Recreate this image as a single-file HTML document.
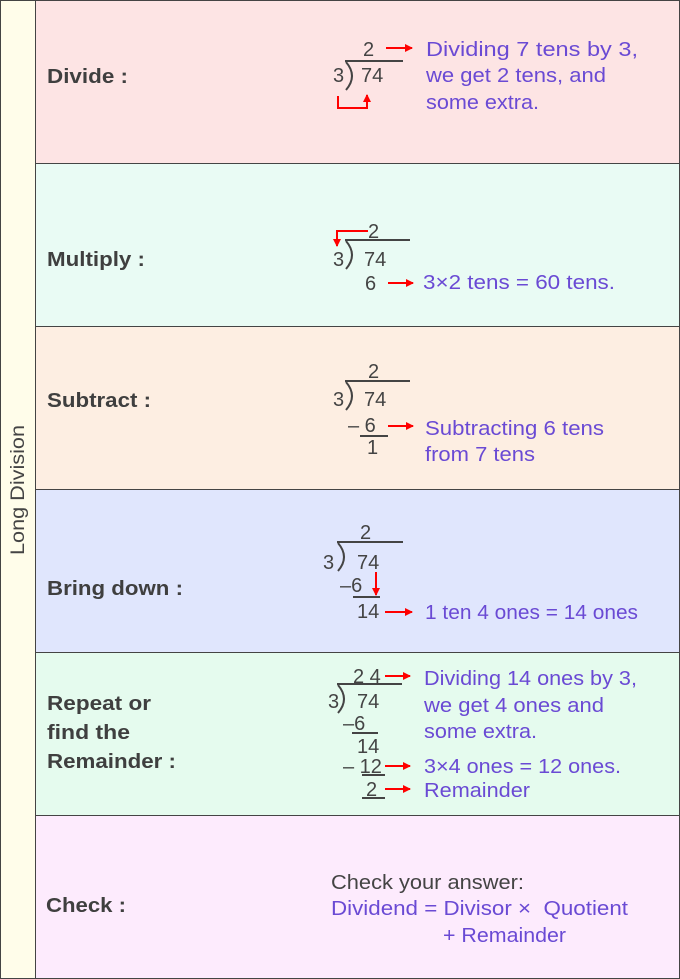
<!DOCTYPE html>
<html><head><style>
body{margin:0;width:680px;height:979px;overflow:hidden;background:#fff}
svg{display:block}
text{font-family:"Liberation Sans",sans-serif}
.l{font-size:20px;font-weight:bold;fill:#3f3f3f}
.d{font-size:20px;fill:#444}
.p{font-size:20px;fill:#6a4ad4}
</style></head><body>
<svg width="680" height="979" viewBox="0 0 680 979">
<defs><marker id="a" markerWidth="8" markerHeight="8" refX="7" refY="4" orient="auto" markerUnits="userSpaceOnUse"><path d="M0,0 L8,4 L0,8Z" fill="#f00"/></marker></defs>
<rect x="0" y="0" width="680" height="979" fill="#444"/>
<rect x="1" y="1" width="34" height="977" fill="#fffdea"/>
<rect x="36" y="1" width="643" height="162" fill="#fde4e4"/>
<rect x="36" y="164" width="643" height="162" fill="#e9fbf4"/>
<rect x="36" y="327" width="643" height="162" fill="#fdeee2"/>
<rect x="36" y="490" width="643" height="162" fill="#e0e6fd"/>
<rect x="36" y="653" width="643" height="162" fill="#e5fbee"/>
<rect x="36" y="816" width="643" height="162" fill="#fdebfd"/>
<text transform="translate(24,490) rotate(-90)" text-anchor="middle" textLength="130" lengthAdjust="spacingAndGlyphs" style="font-size:19px;fill:#444">Long Division</text>
<text x="47" y="83" class="l" textLength="81" lengthAdjust="spacingAndGlyphs">Divide :</text>
<text x="47" y="266" class="l" textLength="98" lengthAdjust="spacingAndGlyphs">Multiply :</text>
<text x="47" y="407" class="l" textLength="104" lengthAdjust="spacingAndGlyphs">Subtract :</text>
<text x="47" y="595" class="l" textLength="136" lengthAdjust="spacingAndGlyphs">Bring down :</text>
<text x="47" y="710" class="l" textLength="104" lengthAdjust="spacingAndGlyphs">Repeat or</text>
<text x="47" y="739" class="l" textLength="83" lengthAdjust="spacingAndGlyphs">find the</text>
<text x="47" y="768" class="l" textLength="129" lengthAdjust="spacingAndGlyphs">Remainder :</text>
<text x="46" y="912" class="l" textLength="80" lengthAdjust="spacingAndGlyphs">Check :</text>
<g stroke="#444" stroke-width="2" fill="none">
<path d="M345,61H403 M346,62 Q358,76 346,90"/>
<path d="M345,240H410 M346,241 Q358,255 346,269"/>
<path d="M345,381H410 M346,382 Q358,396 346,410 M360,436H388"/>
<path d="M337,542H403 M338,543 Q350,557 338,571 M353,597H380"/>
<path d="M337,684H402 M338,685 Q350,699 338,713 M352,733H378 M362,775H385 M362,798H385"/>
</g>
<g stroke="#f00" stroke-width="2" fill="none" marker-end="url(#a)">
<path d="M386,48H412"/>
<path d="M338,96V108H367V95"/>
<path d="M368,231H337V246"/>
<path d="M388,283H413"/>
<path d="M388,426H413"/>
<path d="M376,572V595"/>
<path d="M385,612H412"/>
<path d="M385,676H410"/>
<path d="M385,766H410"/>
<path d="M385,789H410"/>
</g>
<g>
<text x="363" y="56" class="d">2</text><text x="333" y="82" class="d">3</text><text x="361" y="82" class="d">74</text>
<text x="368" y="238" class="d">2</text><text x="333" y="266" class="d">3</text><text x="364" y="266" class="d">74</text><text x="365" y="290" class="d">6</text>
<text x="368" y="378" class="d">2</text><text x="333" y="406" class="d">3</text><text x="364" y="406" class="d">74</text><text x="348" y="432" class="d">– 6</text><text x="367" y="454" class="d">1</text>
<text x="360" y="539" class="d">2</text><text x="323" y="569" class="d">3</text><text x="357" y="569" class="d">74</text><text x="340" y="592" class="d">–6</text><text x="357" y="618" class="d">14</text>
<text x="353" y="683" class="d">2 4</text><text x="328" y="708" class="d">3</text><text x="357" y="708" class="d">74</text><text x="343" y="730" class="d">–6</text><text x="357" y="753" class="d">14</text><text x="343" y="773" class="d">– 12</text><text x="366" y="796" class="d">2</text>
<text x="331" y="889" class="d" textLength="193" lengthAdjust="spacingAndGlyphs">Check your answer:</text>
</g>
<g>
<text x="426" y="56" class="p" textLength="212" lengthAdjust="spacingAndGlyphs">Dividing 7 tens by 3,</text>
<text x="426" y="82" class="p" textLength="180" lengthAdjust="spacingAndGlyphs">we get 2 tens, and</text>
<text x="426" y="109" class="p" textLength="113" lengthAdjust="spacingAndGlyphs">some extra.</text>
<text x="423" y="289" class="p" textLength="192" lengthAdjust="spacingAndGlyphs">3×2 tens = 60 tens.</text>
<text x="425" y="435" class="p" textLength="179" lengthAdjust="spacingAndGlyphs">Subtracting 6 tens</text>
<text x="425" y="461" class="p" textLength="110" lengthAdjust="spacingAndGlyphs">from 7 tens</text>
<text x="425" y="619" class="p" textLength="213" lengthAdjust="spacingAndGlyphs">1 ten 4 ones = 14 ones</text>
<text x="424" y="685" class="p" textLength="213" lengthAdjust="spacingAndGlyphs">Dividing 14 ones by 3,</text>
<text x="424" y="712" class="p" textLength="180" lengthAdjust="spacingAndGlyphs">we get 4 ones and</text>
<text x="424" y="738" class="p" textLength="113" lengthAdjust="spacingAndGlyphs">some extra.</text>
<text x="424" y="773" class="p" textLength="197" lengthAdjust="spacingAndGlyphs">3×4 ones = 12 ones.</text>
<text x="424" y="797" class="p" textLength="106" lengthAdjust="spacingAndGlyphs">Remainder</text>
<text x="331" y="915" class="p" textLength="297" lengthAdjust="spacingAndGlyphs">Dividend = Divisor × &#160;Quotient</text>
<text x="443" y="942" class="p" textLength="123" lengthAdjust="spacingAndGlyphs">+ Remainder</text>
</g>
</svg>
</body></html>
